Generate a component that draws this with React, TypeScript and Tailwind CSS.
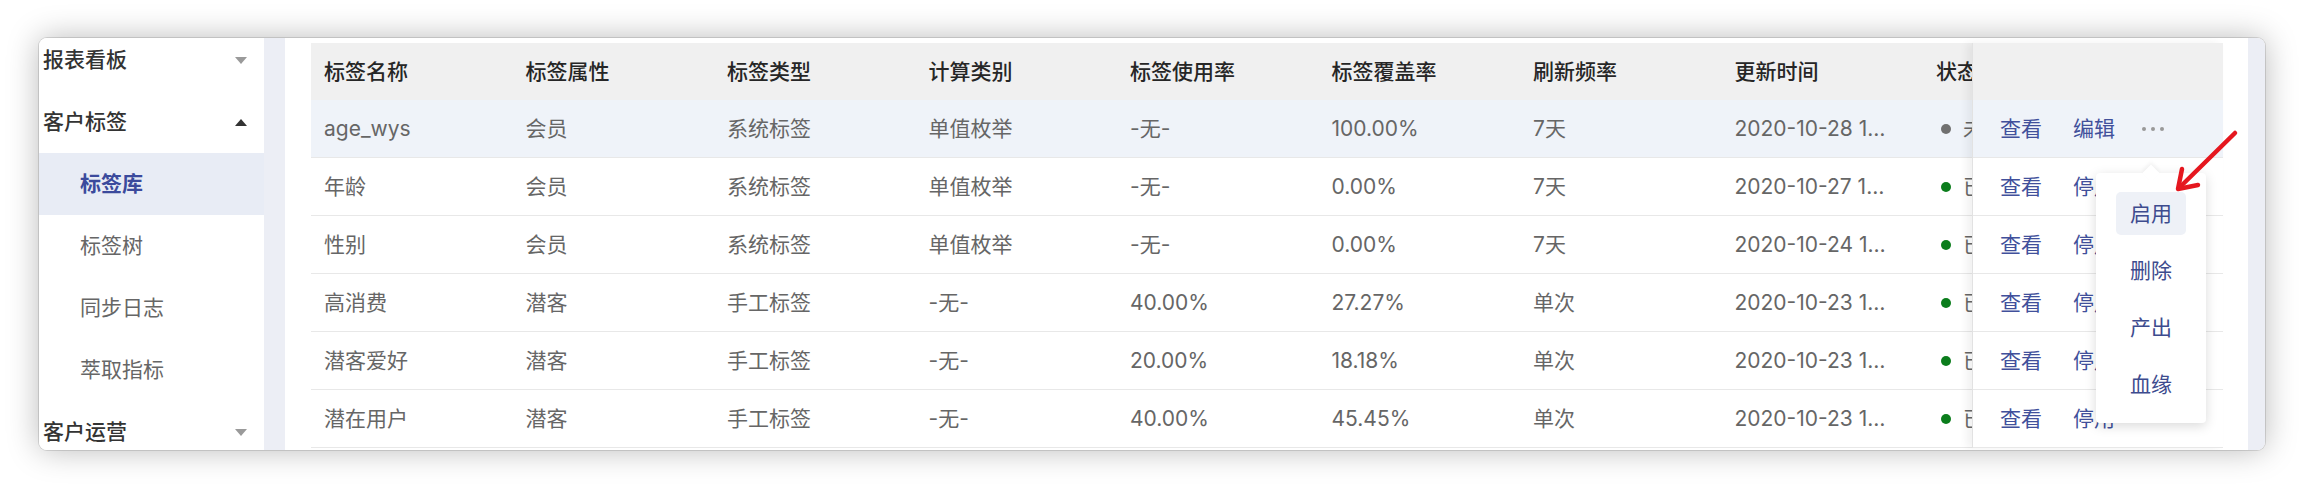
import React from "react";

type Row = {
  name: string;
  attr: string;
  kind: string;
  calc: string;
  usage: string;
  cover: string;
  freq: string;
  time: string;
  enabled: boolean;
};

const HEADERS = ["标签名称", "标签属性", "标签类型", "计算类别", "标签使用率", "标签覆盖率", "刷新频率", "更新时间"];

const ROWS: Row[] = [
  { name: "age_wys", attr: "会员", kind: "系统标签", calc: "单值枚举", usage: "-无-", cover: "100.00%", freq: "7天", time: "2020-10-28 1…", enabled: false },
  { name: "年龄", attr: "会员", kind: "系统标签", calc: "单值枚举", usage: "-无-", cover: "0.00%", freq: "7天", time: "2020-10-27 1…", enabled: true },
  { name: "性别", attr: "会员", kind: "系统标签", calc: "单值枚举", usage: "-无-", cover: "0.00%", freq: "7天", time: "2020-10-24 1…", enabled: true },
  { name: "高消费", attr: "潜客", kind: "手工标签", calc: "-无-", usage: "40.00%", cover: "27.27%", freq: "单次", time: "2020-10-23 1…", enabled: true },
  { name: "潜客爱好", attr: "潜客", kind: "手工标签", calc: "-无-", usage: "20.00%", cover: "18.18%", freq: "单次", time: "2020-10-23 1…", enabled: true },
  { name: "潜在用户", attr: "潜客", kind: "手工标签", calc: "-无-", usage: "40.00%", cover: "45.45%", freq: "单次", time: "2020-10-23 1…", enabled: true },
];

function Caret({ up }: { up?: boolean }) {
  return (
    <svg width="12" height="7" viewBox="0 0 12 7">
      {up ? <path d="M0 7 L6 0 L12 7 Z" fill="#333" /> : <path d="M0 0 L12 0 L6 7 Z" fill="#9a9a9a" />}
    </svg>
  );
}

function Sidebar() {
  return (
    <div className="w-[225px] shrink-0 overflow-hidden bg-white">
      <div className="-mt-[9px]">
        <div className="flex h-[62px] items-center justify-between pl-[4px] pr-[17px] text-[21px] font-medium text-[#333]">
          <span>报表看板</span>
          <Caret />
        </div>
        <div className="flex h-[62px] items-center justify-between pl-[4px] pr-[17px] text-[21px] font-medium text-[#333]">
          <span>客户标签</span>
          <Caret up />
        </div>
        <div className="flex h-[62px] items-center bg-[#e8ecf5] pl-[41px] text-[21px] font-semibold text-[#3b4a9c]">标签库</div>
        <div className="flex h-[62px] items-center pl-[41px] text-[21px] text-[#666]">标签树</div>
        <div className="flex h-[62px] items-center pl-[41px] text-[21px] text-[#666]">同步日志</div>
        <div className="flex h-[62px] items-center pl-[41px] text-[21px] text-[#666]">萃取指标</div>
        <div className="flex h-[62px] items-center justify-between pl-[4px] pr-[17px] text-[21px] font-medium text-[#333]">
          <span>客户运营</span>
          <Caret />
        </div>
      </div>
    </div>
  );
}

function Table() {
  return (
    <div className="flex w-[1912px] text-[21px]">
      {/* scrolling part */}
      <div className="w-[1661px] shrink-0 overflow-hidden">
        <div className="flex h-[57px] w-[1900px] items-center bg-[#f0f0f0] font-medium text-[#262626]">
          {HEADERS.map((h) => (
            <div key={h} className="w-[201.5px] shrink-0 pl-[13px]">
              {h}
            </div>
          ))}
          <div className="pl-[13px]">状态</div>
        </div>
        {ROWS.map((r, i) => (
          <div
            key={r.name}
            className={`flex h-[58px] w-[1900px] items-center border-b border-[#e8e8e8] text-[#666] ${i === 0 ? "bg-[#eff3f9]" : "bg-white"}`}
          >
            {[r.name, r.attr, r.kind, r.calc, r.usage, r.cover, r.freq, r.time].map((v, j) => (
              <div key={j} className="w-[201.5px] shrink-0 whitespace-nowrap pl-[13px]">
                {v}
              </div>
            ))}
            <div className="flex items-center pl-[13px]">
              <span className={`ml-[5px] h-[10px] w-[10px] rounded-full ${r.enabled ? "bg-[#0b7d1c]" : "bg-[#707070]"}`} />
              <span className="ml-[12px] whitespace-nowrap">{r.enabled ? "已启用" : "未启用"}</span>
            </div>
          </div>
        ))}
      </div>

      {/* fixed action column */}
      <div className="relative z-10 w-[251px] shrink-0 border-l border-[#e2e2e2] shadow-[-5px_0_8px_rgba(0,0,0,0.06)]">
        <div className="h-[57px] bg-[#f0f0f0]" />
        {ROWS.map((r, i) => (
          <div
            key={r.name}
            className={`flex h-[58px] items-center border-b border-[#e8e8e8] pl-[27px] text-[#41509b] ${i === 0 ? "bg-[#eff3f9]" : "bg-white"}`}
          >
            <span>查看</span>
            <span className="ml-[31px]">{r.enabled ? "停用" : "编辑"}</span>
            {!r.enabled && (
              <span className="ml-[27px] flex items-center gap-[5px]">
                <span className="h-[4px] w-[4px] rounded-full bg-[#999]" />
                <span className="h-[4px] w-[4px] rounded-full bg-[#999]" />
                <span className="h-[4px] w-[4px] rounded-full bg-[#999]" />
              </span>
            )}
          </div>
        ))}
      </div>
    </div>
  );
}

function MoreMenu() {
  const items = ["启用", "删除", "产出", "血缘"];
  return (
    <div className="absolute left-[2096px] top-[173px] z-20 h-[250px] w-[110px] rounded-[4px] bg-white px-[20px] pt-[19px] shadow-[0_3px_12px_rgba(0,0,0,0.15)]">
      <span className="absolute -top-[6px] left-[49px] h-[12px] w-[12px] rotate-45 bg-white shadow-[-2px_-2px_4px_rgba(0,0,0,0.05)]" />
      <div className="relative flex flex-col gap-[14px]">
        {items.map((t, i) => (
          <div
            key={t}
            className={`flex h-[43px] items-center rounded-[5px] pl-[14px] text-[21px] text-[#3d4b8e] ${i === 0 ? "bg-[#eef1f7]" : ""}`}
          >
            {t}
          </div>
        ))}
      </div>
    </div>
  );
}

function RedArrow() {
  return (
    <svg className="absolute left-[2165px] top-[120px] z-30" width="90" height="85" viewBox="0 0 90 85">
      <g stroke="#e5171f" strokeWidth="4.5" strokeLinecap="round" strokeLinejoin="round" fill="none">
        <line x1="70" y1="13" x2="14" y2="68" />
        <polyline points="17,49 13,69 33,65" />
      </g>
    </svg>
  );
}

export default function App() {
  return (
    <div className="relative h-[489px] w-[2304px] overflow-hidden bg-white pl-[39px] pt-[38px] font-['Inter','Noto_Sans_CJK_SC',sans-serif]">
      <div className="flex h-[412px] w-[2226px] overflow-hidden rounded-[8px] shadow-[0_0_0_1px_rgba(0,0,0,0.12),0_0_32px_rgba(0,0,0,0.28)]">
        <Sidebar />
        <div className="flex flex-1 bg-[#eceef5] pl-[21px] pr-[17px]">
          <div className="flex-1 bg-white pl-[26px] pr-[25px] pt-[5px]">
            <Table />
          </div>
        </div>
      </div>
      <MoreMenu />
      <RedArrow />
    </div>
  );
}
